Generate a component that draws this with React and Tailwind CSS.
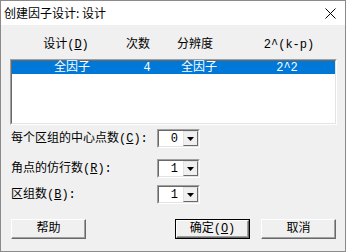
import React from 'react';

const font = "font-['Liberation_Mono','Noto_Sans_CJK_SC',monospace]";

const Combo = ({ value, className = '' }) => (
  <div
    className={`flex h-[19px] w-[43px] items-stretch border border-t-[#a0a0a0] border-l-[#a0a0a0] border-r-white border-b-white ${className}`}
  >
    <div className="flex flex-1 items-stretch border border-t-[#696969] border-l-[#696969] border-r-[#e3e3e3] border-b-[#e3e3e3] bg-white">
      <div className="flex flex-1 items-center justify-end pr-[5px] text-[12px] leading-none text-black">{value}</div>
      <div className="flex w-[15px] items-center justify-center border border-t-[#e3e3e3] border-l-[#e3e3e3] border-r-[#696969] border-b-[#696969] bg-[#f0f0f0]">
        <svg width="7" height="4" viewBox="0 0 7 4">
          <path d="M0 0h7L3.5 4z" fill="#000" />
        </svg>
      </div>
    </div>
  </div>
);

const Button = ({ children, primary }) => (
  <div className={`h-[20px] w-[75px] ${primary ? 'border border-black' : ''}`}>
    <div
      className={`flex h-full w-full items-center justify-center border border-t-white border-l-white border-r-[#696969] border-b-[#696969] bg-[#f0f0f0] text-[12px] leading-none text-black shadow-[inset_-1px_-1px_0_#a0a0a0]`}
    >
      {children}
    </div>
  </div>
);

export default function App() {
  return (
    <div className={`flex h-[252px] w-[346px] flex-col overflow-hidden border border-[#8a8a8a] bg-[#f0f0f0] ${font}`}>
      {/* Title bar */}
      <div className="flex h-[24px] shrink-0 items-center justify-between bg-white pl-[3px] pr-[9px]">
        <span className="font-['Noto_Sans_CJK_SC',sans-serif] text-[12px] text-black">创建因子设计: 设计</span>
        <svg width="11" height="11" viewBox="0 0 11 11">
          <path d="M0.5 0.5L10.5 10.5M10.5 0.5L0.5 10.5" stroke="#000" strokeWidth="1" />
        </svg>
      </div>

      <div className="flex flex-1 flex-col px-[9px]">
        {/* Column headers */}
        <div className="mt-[13px] flex h-[14px] items-center text-[12px] leading-none text-black">
          <span className="ml-[26px] w-[60px] text-center">
            设计(<span className="underline">D</span>)
          </span>
          <span className="ml-[22px] w-[40px] text-center">次数</span>
          <span className="ml-[12px] w-[50px] text-center">分辨度</span>
          <span className="ml-[39px] w-[60px] text-center">2^(k-p)</span>
        </div>

        {/* List box */}
        <div className="mt-[7px] h-[66px] w-[327px] border border-t-[#a0a0a0] border-l-[#a0a0a0] border-r-white border-b-white">
          <div className="h-full w-full border border-t-[#696969] border-l-[#696969] border-r-[#e3e3e3] border-b-[#e3e3e3] bg-white">
            <div className="flex h-[13px] items-center bg-[#0078d7] text-[12px] leading-none text-white">
              <span className="ml-[30px] w-[60px] text-center">全因子</span>
              <span className="ml-[35px] w-[20px] text-center">4</span>
              <span className="ml-[17px] w-[50px] text-center">全因子</span>
              <span className="ml-[38px] w-[50px] text-center">2^2</span>
            </div>
          </div>
        </div>

        {/* Options */}
        <div className="mt-[4px] flex items-center text-[12px] leading-none text-black">
          <span className="w-[147px] pl-[1px]">
            每个区组的中心点数(<span className="underline">C</span>):
          </span>
          <Combo value="0" />
        </div>
        <div className="mt-[11px] flex items-center text-[12px] leading-none text-black">
          <span className="w-[147px] pl-[1px]">
            角点的仿行数(<span className="underline">R</span>):
          </span>
          <Combo value="1" />
        </div>
        <div className="mt-[7px] flex items-center text-[12px] leading-none text-black">
          <span className="w-[147px] pl-[1px]">
            区组数(<span className="underline">B</span>):
          </span>
          <Combo value="1" />
        </div>

        {/* Buttons */}
        <div className="mt-[15px] flex items-center pl-[1px]">
          <Button>帮助</Button>
          <div className="flex-1" />
          <Button primary>
            确定(<span className="underline">O</span>)
          </Button>
          <div className="w-[11px]" />
          <Button>取消</Button>
        </div>
      </div>
    </div>
  );
}
